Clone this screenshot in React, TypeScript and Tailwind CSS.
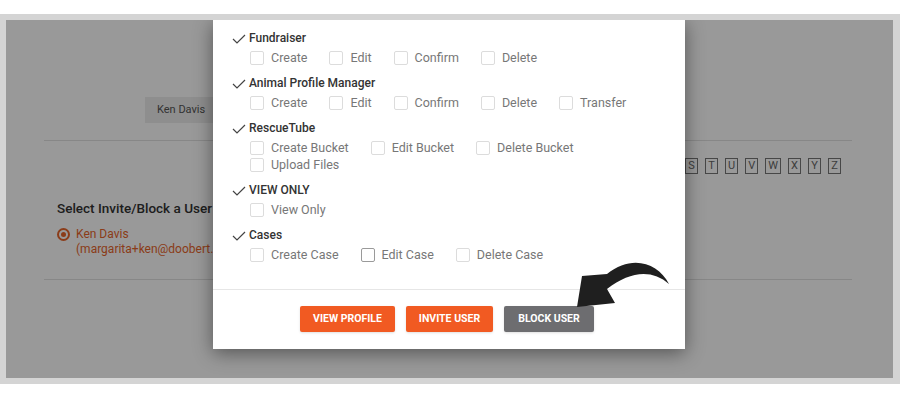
import React from 'react';

const font = { fontFamily: 'Roboto, "Liberation Sans", sans-serif' };

const letters = 'ABCDEFGHIJKLMNOPQRSTUVWXYZ'.split('');

interface Group {
  title: string;
  rows: string[][];
  dark?: string[];
}

const groups: Group[] = [
  { title: 'Fundraiser', rows: [['Create', 'Edit', 'Confirm', 'Delete']] },
  { title: 'Animal Profile Manager', rows: [['Create', 'Edit', 'Confirm', 'Delete', 'Transfer']] },
  { title: 'RescueTube', rows: [['Create Bucket', 'Edit Bucket', 'Delete Bucket'], ['Upload Files']] },
  { title: 'VIEW ONLY', rows: [['View Only']] },
  { title: 'Cases', rows: [['Create Case', 'Edit Case', 'Delete Case']], dark: ['Edit Case'] },
];

const Check = () => (
  <svg width="14" height="10" viewBox="0 0 14 10" className="mr-[3px]">
    <polyline points="1,5 5,9 13,1" fill="none" stroke="#444" strokeWidth="1.2" />
  </svg>
);

const PermissionGroup: React.FC<{ group: Group }> = ({ group }) => (
  <div className="mb-[9px]">
    <div className="flex h-[17px] items-center text-[12px] leading-[17px] font-medium text-[#333]">
      <Check />
      {group.title}
    </div>
    <div className="mt-[2px] pl-[18px]">
      {group.rows.map((row, i) => (
        <div key={i} className="flex h-[17px] items-center">
          {row.map((label) => (
            <label
              key={label}
              className="mr-[22px] flex h-[17px] items-center text-[12.5px] leading-[14px] text-[#777]"
            >
              <span
                className={`mr-[7px] inline-block h-[14px] w-[14px] rounded-[2px] border ${
                  group.dark?.includes(label) ? 'border-[#9a9a9a]' : 'border-[#dcdcdc]'
                }`}
              />
              {label}
            </label>
          ))}
        </div>
      ))}
    </div>
  </div>
);

export default function App() {
  return (
    <div className="h-[400px] w-[900px] overflow-hidden bg-white" style={font}>
      <div className="mt-[14px] h-[370px] bg-[#d4d4d4] pb-[6px] pl-[6px] pr-[7px] pt-[6px]">
        <div className="relative h-full overflow-hidden bg-white">
          {/* Page underneath */}
          <div className="pl-[38px] pr-[41px] pt-[77px]">
            <div className="ml-[101px] flex h-[26px] w-[120px] items-center bg-[#ededed] pl-[12px] text-[11px] text-[#555]">
              Ken Davis
            </div>
            <div className="mt-[17px] h-px bg-[#e2e2e2]" />
            <div className="mr-[11px] mt-[17px] flex justify-end gap-[7px]">
              {letters.map((l) => (
                <span
                  key={l}
                  className="flex h-[16px] min-w-[13px] items-center justify-center border border-[#777] px-[2px] text-[11px] text-[#666]"
                >
                  {l}
                </span>
              ))}
            </div>
            <div className="ml-[13px] mt-[24px] text-[13.5px] font-medium text-[#333]">Select Invite/Block a User</div>
            <div className="ml-[13px] mt-[9px] flex items-start">
              <span className="mt-[1px] flex h-[13px] w-[13px] items-center justify-center rounded-full border-2 border-[#e8652b]">
                <span className="h-[5px] w-[5px] rounded-full bg-[#e8652b]" />
              </span>
              <div className="ml-[6px] text-[12px] leading-[15px] text-[#e8652b]">
                <div>Ken Davis</div>
                <div>(margarita+ken@doobert.com)</div>
              </div>
            </div>
            <div className="mt-[22px] h-px bg-[#e2e2e2]" />
          </div>

          {/* Overlay */}
          <div className="absolute inset-0 bg-black/40" />

          {/* Modal */}
          <div className="absolute left-[207px] top-0 h-[329px] w-[472px] bg-white shadow-[0_4px_18px_rgba(0,0,0,0.45)]">
            <div className="h-[269px] pl-[19px] pt-[10px]">
              {groups.map((g) => (
                <PermissionGroup key={g.title} group={g} />
              ))}
            </div>
            <div className="h-px bg-[#e6e6e6]" />
            <div className="flex justify-center gap-[11px] pr-[4px] pt-[16px]">
              <button className="h-[26px] w-[95px] rounded-[2px] bg-[#f15a22] text-[10.5px] font-bold text-white shadow-sm">
                VIEW PROFILE
              </button>
              <button className="h-[26px] w-[87px] rounded-[2px] bg-[#f15a22] text-[10.5px] font-bold text-white shadow-sm">
                INVITE USER
              </button>
              <button className="h-[26px] w-[90px] rounded-[2px] bg-[#6d6d70] text-[10.5px] font-bold text-white shadow-sm">
                BLOCK USER
              </button>
            </div>
          </div>

          {/* Arrow annotation */}
          <svg className="absolute left-[564px] top-[235px]" width="105" height="58" viewBox="0 0 105 58">
            <path
              d="M99,29 C88,8 62,-1 37,19 L12,21 L7,52 L45,48 L37,34 C60,16 82,14 99,29 Z"
              fill="#1f1f1f"
            />
          </svg>
        </div>
      </div>
    </div>
  );
}
